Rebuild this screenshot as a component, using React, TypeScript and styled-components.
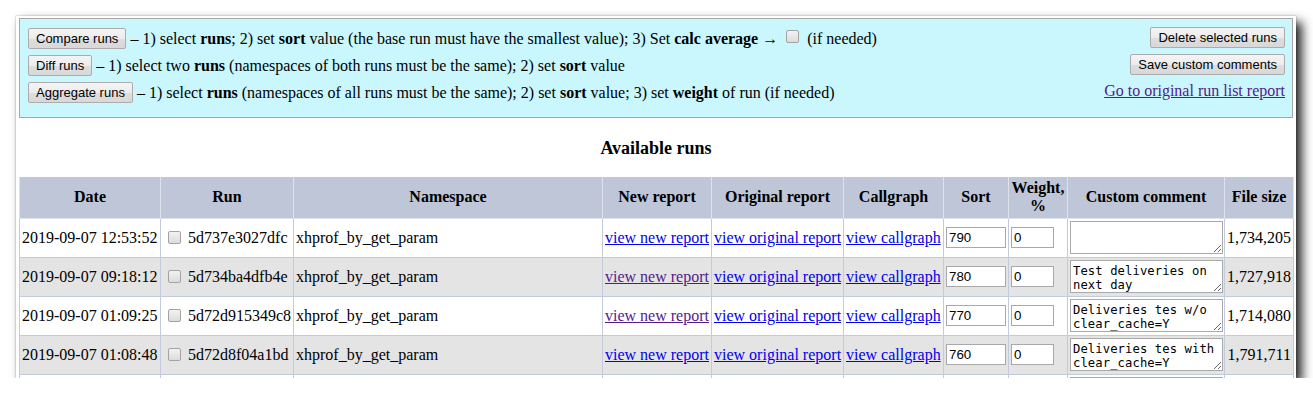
import React from "react";
import styled, { createGlobalStyle } from "styled-components";

const GlobalStyle = createGlobalStyle`
  html, body { margin: 0; padding: 0; background: #ffffff; }
  body { font-family: "Liberation Serif", "Times New Roman", serif; font-size: 16px; color: #000; }
`;

const Page = styled.div`
  padding: 16px 0 0 16px;
`;

const Window = styled.div`
  box-sizing: border-box;
  width: 1280px;
  height: 362px;
  background: #fff;
  padding: 2px 3px 0 3px;
  overflow: hidden;
  box-shadow: 0 0 2px rgba(0, 0, 0, 0.3), 6px 6px 10px rgba(0, 0, 0, 0.85);
`;

const Panel = styled.div`
  display: flex;
  justify-content: space-between;
  align-items: flex-start;
  background: #c9f7fd;
  border: 1px solid #a8a8a8;
  padding: 9px 7px 14px 8px;
`;

const LeftCol = styled.div`
  display: flex;
  flex-direction: column;
  gap: 6px;
`;

const RightCol = styled.div`
  display: flex;
  flex-direction: column;
  align-items: flex-end;
  gap: 6px;
  margin-top: -1px;
`;

const Line = styled.div`
  display: flex;
  align-items: center;
  height: 21px;
  white-space: pre;
  line-height: 20px;
`;

const Button = styled.button`
  box-sizing: border-box;
  height: 21px;
  padding: 0 7px;
  font-family: "Liberation Sans", Arial, sans-serif;
  font-size: 13px;
  color: #000;
  background: linear-gradient(#f4f4f4, #ececec 50%, #dedede 51%, #d8d8d8);
  border: 1px solid #acacac;
  border-radius: 2px;
  margin: 0;
`;

const checkboxLook = `
  appearance: none;
  -webkit-appearance: none;
  box-sizing: border-box;
  width: 13px;
  height: 13px;
  border: 1px solid #a3a3a3;
  border-radius: 2px;
  background: linear-gradient(#f2f2f2, #dcdcdc);
`;

const Check = styled.input`
  ${checkboxLook}
  margin: 0 8px 0 8px;
  position: relative;
  top: -2px;
`;

const Link = styled.a<{ $visited?: boolean }>`
  color: ${(p) => (p.$visited ? "#551a8b" : "#0000ee")};
  text-decoration: underline;
  cursor: pointer;
  white-space: nowrap;
`;

const TopLink = styled(Link)`
  line-height: 20px;
`;

const Title = styled.div`
  text-align: center;
  font-weight: bold;
  font-size: 18px;
  line-height: 18px;
  padding: 21px 0 20px 0;
`;

const Table = styled.table`
  width: 1274px;
  border-collapse: collapse;
  table-layout: fixed;
`;

const Th = styled.th`
  background: #bec6d8;
  border: 1px solid #dde2ec;
  border-top: none;
  font-weight: bold;
  font-size: 16px;
  line-height: 18px;
  height: 41px;
  padding: 0 2px;
  text-align: center;
  vertical-align: middle;
  box-sizing: border-box;
`;

const Tr = styled.tr<{ $alt?: boolean }>`
  background: ${(p) => (p.$alt ? "#e4e4e4" : "#ffffff")};
`;

const Td = styled.td<{ $align?: string }>`
  border: 1px solid #c3cadb;
  padding: 2px 2px 2px 2px;
  height: 34px;
  vertical-align: middle;
  text-align: ${(p) => p.$align || "left"};
  white-space: nowrap;
  overflow: hidden;
`;

const RunCheck = styled.input`
  ${checkboxLook}
  margin: 0 7px 0 5px;
  vertical-align: -1px;
`;

const TextInput = styled.input<{ $w: number }>`
  box-sizing: border-box;
  width: ${(p) => p.$w}px;
  height: 21px;
  border: 1px solid #a9a9a9;
  padding: 0 2px;
  font-family: "Liberation Sans", Arial, sans-serif;
  font-size: 13.3px;
  background: #fff;
  display: block;
`;

const Comment = styled.textarea`
  box-sizing: border-box;
  display: block;
  width: 153px;
  height: 33px;
  border: 1px solid #a9a9a9;
  padding: 3px 2px 0 2px;
  font-family: "DejaVu Sans Mono", "Liberation Mono", monospace;
  font-size: 12.2px;
  line-height: 14px;
  letter-spacing: 0.1px;
  background: #fff;
  margin: 0;
  overflow: hidden;
`;

type Run = {
  date: string;
  id: string;
  sort: string;
  comment: string;
  size: string;
  visited?: boolean;
  hidden?: boolean;
};

const runs: Run[] = [
  { date: "2019-09-07 12:53:52", id: "5d737e3027dfc", sort: "790", comment: "", size: "1,734,205" },
  { date: "2019-09-07 09:18:12", id: "5d734ba4dfb4e", sort: "780", comment: "Test deliveries on next day", size: "1,727,918", visited: true },
  { date: "2019-09-07 01:09:25", id: "5d72d915349c8", sort: "770", comment: "Deliveries tes w/o clear_cache=Y", size: "1,714,080", visited: true },
  { date: "2019-09-07 01:08:48", id: "5d72d8f04a1bd", sort: "760", comment: "Deliveries tes with clear_cache=Y", size: "1,791,711" },
  { date: "", id: "", sort: "", comment: "", size: "", hidden: true },
];

const widths = [141, 133, 309, 109, 132, 100, 65, 59, 157, 69];

export default function App() {
  return (
    <>
      <GlobalStyle />
      <Page>
        <Window>
          <Panel>
            <LeftCol>
              <Line>
                <Button>Compare runs</Button>
                {" – 1) select "}<b>runs</b>{"; 2) set "}<b>sort</b>
                {" value (the base run must have the smallest value); 3) Set "}
                <b>calc average</b>{" →"}
                <Check type="checkbox" />
                {"(if needed)"}
              </Line>
              <Line>
                <Button>Diff runs</Button>
                {" – 1) select two "}<b>runs</b>
                {" (namespaces of both runs must be the same); 2) set "}<b>sort</b>{" value"}
              </Line>
              <Line>
                <Button>Aggregate runs</Button>
                {" – 1) select "}<b>runs</b>
                {" (namespaces of all runs must be the same); 2) set "}<b>sort</b>
                {" value; 3) set "}<b>weight</b>{" of run (if needed)"}
              </Line>
            </LeftCol>
            <RightCol>
              <Button>Delete selected runs</Button>
              <Button>Save custom comments</Button>
              <TopLink $visited>Go to original run list report</TopLink>
            </RightCol>
          </Panel>
          <Title>Available runs</Title>
          <Table>
            <colgroup>
              {widths.map((w, i) => (
                <col key={i} style={{ width: w }} />
              ))}
            </colgroup>
            <thead>
              <tr>
                <Th>Date</Th>
                <Th>Run</Th>
                <Th>Namespace</Th>
                <Th>New report</Th>
                <Th>Original report</Th>
                <Th>Callgraph</Th>
                <Th>Sort</Th>
                <Th>Weight,<br />%</Th>
                <Th>Custom comment</Th>
                <Th>File size</Th>
              </tr>
            </thead>
            <tbody>
              {runs.map((r, i) => (
                <Tr key={i} $alt={i % 2 === 1}>
                  <Td>{r.date}</Td>
                  <Td>
                    {!r.hidden && <RunCheck type="checkbox" />}
                    {r.id}
                  </Td>
                  <Td>{r.hidden ? "" : "xhprof_by_get_param"}</Td>
                  <Td>{!r.hidden && <Link $visited={r.visited}>view new report</Link>}</Td>
                  <Td>{!r.hidden && <Link>view original report</Link>}</Td>
                  <Td>{!r.hidden && <Link>view callgraph</Link>}</Td>
                  <Td>{!r.hidden && <TextInput $w={60} defaultValue={r.sort} />}</Td>
                  <Td>{!r.hidden && <TextInput $w={43} defaultValue="0" />}</Td>
                  <Td><Comment defaultValue={r.comment} /></Td>
                  <Td $align="right">{r.size}</Td>
                </Tr>
              ))}
            </tbody>
          </Table>
        </Window>
      </Page>
    </>
  );
}
